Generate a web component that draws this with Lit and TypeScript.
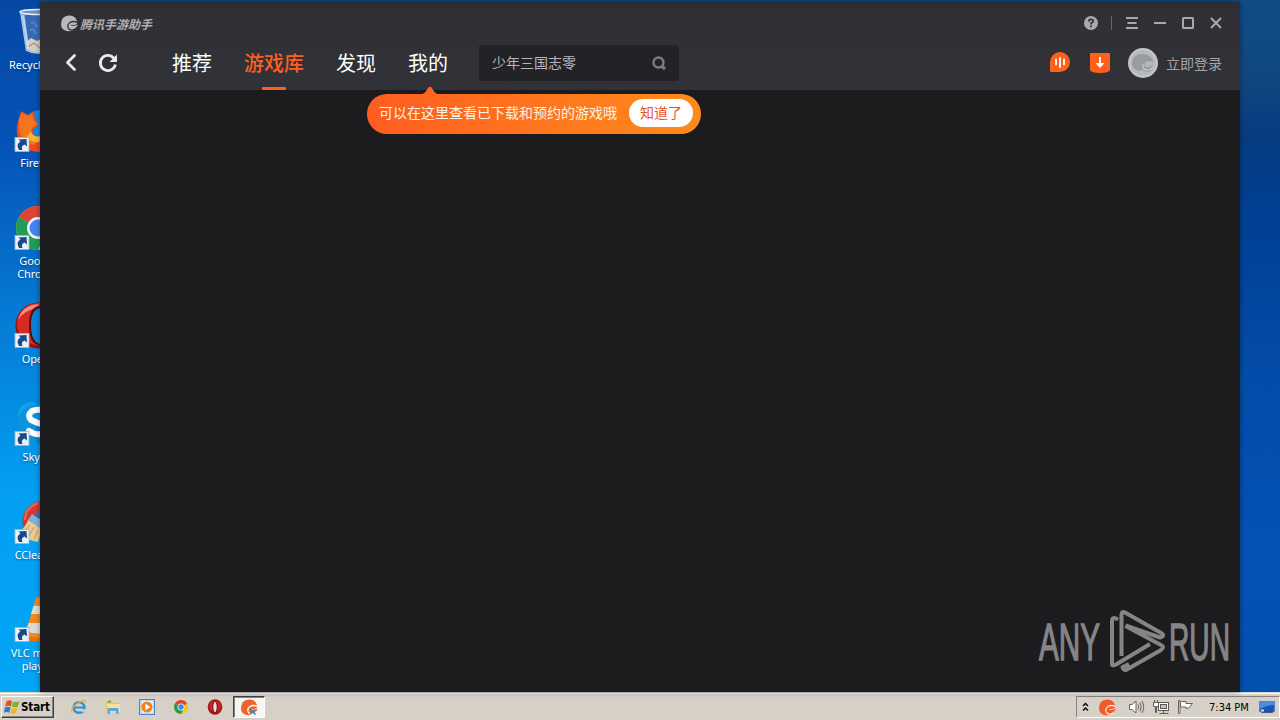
import { LitElement, html, css, svg, nothing } from 'lit';
import { customElement, property, state } from 'lit/decorators.js';
import { classMap } from 'lit/directives/class-map.js';

const shortcutIcons: Record<string, unknown> = {
  bin: svg`
    <path d="M7 3 L12 43 Q24 48 36 43 L41 3Z" fill="#7fa9d8" opacity="0.6"/>
    <path d="M11 7 L14 33 L34 33 L38 7Z" fill="#2f62b0" opacity="0.75"/>
    <path d="M12 34 L17 30 L23 33 L29 30 L36 34 L34 43 Q24 47 14 42Z" fill="#d5cfc2"/>
    <path d="M14 39 L20 35 L26 40 L31 36" stroke="#a58f72" stroke-width="1.200" fill="none"/>
    <path d="M9 7 L14 41" stroke="#d9e6f3" stroke-width="2.500" opacity="0.8"/>
    <path d="M6.500 3 L12.500 42 Q24 48 35 42 L41 3" fill="none" stroke="#a9c6e6" stroke-width="1.500"/>
    <ellipse cx="24" cy="4" rx="18" ry="2.500" fill="#6e93c0" stroke="#e2edf7" stroke-width="1.500"/>
    <path d="M17 15 Q21 13 23 19 M16 22 Q20 20 22 26" stroke="#4f86cf" stroke-width="2" fill="none"/>
  `,
  firefox: svg`
    <circle cx="27" cy="24" r="20" fill="#1686dd"/>
    <path d="M5 12 L7 5 L14 9 L20 5 L21 14 L25 19 L19 23 Q17 32 26 33 L44 22 Q46 45 25 46 Q6 45 3 28 Q2 18 5 12Z" fill="#ee4b1d"/>
    <path d="M5 13 L8 7 L14 10 L18 8 L20 15 L24 18 L18 22 Q14 30 23 35 L20 39 Q7 36 5 24Z" fill="#f3761f"/>
    <path d="M17 25 Q18 32 28 30 L25 36 Q17 37 13 31Z" fill="#f7b52c"/>
  `,
  chrome: svg`
    <circle cx="24" cy="24" r="22" fill="#fbc116"/>
    <path d="M24 24 L5 13 A22 22 0 0 1 43 13Z" fill="#db4437"/>
    <path d="M24 24 L5 13 A22 22 0 0 0 24 46 L29 34Z" fill="#1e9d57"/>
    <circle cx="24" cy="24" r="11" fill="#f2f4f5"/>
    <circle cx="24" cy="24" r="8.500" fill="#4285f4"/>
  `,
  opera: svg`
    <ellipse cx="24" cy="23.500" rx="22.500" ry="23" fill="#8d1512"/>
    <ellipse cx="24" cy="22" rx="21" ry="21" fill="#d62a22"/>
    <path d="M4 18 Q7 4 24 2 L24 6 Q10 8 4 18Z" fill="#f28d80"/>
    <path d="M15 23 Q15 4 26 4 Q38 4 38 23 Q38 43 26 43 Q15 43 15 23Z" fill="#5a0d0c"/>
    <path d="M17 23 Q17 6 28 6 Q38 6 38 23 Q38 42 28 42 Q17 42 17 23Z" fill="#0b82d8"/>
  `,
  skype: svg`
    <circle cx="17" cy="15" r="13" fill="#0fa0e6"/>
    <circle cx="24" cy="24" r="20" fill="#0b93dd"/>
    <circle cx="32" cy="34" r="12" fill="#0a7fd0"/>
    <path d="M34 12 Q24 8 18 11 Q13 15 17 20 Q21 22 27 24 Q34 27 31 32 Q24 37 15 31" fill="none" stroke="#fff" stroke-width="6" stroke-linecap="round"/>
  `,
  ccleaner: svg`
    <path d="M9 28 Q6 12 22 4 Q30 2 40 4 L40 28 L20 34Z" fill="#cf3a31"/>
    <path d="M11 22 Q11 10 24 5" fill="none" stroke="#e26a5d" stroke-width="2"/>
    <path d="M32 4 L21 18 L30 24 L40 10Z" fill="#2f6fb3"/>
    <path d="M18 16 L32 25 L28 31 L14 22Z" fill="#7fb3d8"/>
    <path d="M14 22 L28 31 L24 44 Q13 42 3 35 Q11 31 14 22Z" fill="#ecca95"/>
    <path d="M16 27 L9 35 M20 29 L15 38 M24 32 L20 41" stroke="#c79a5c" fill="none"/>
  `,
  vlc: svg`
    <path d="M9 35 L39 35 L44 45 L4 45Z" fill="#e8730c"/>
    <path d="M22 2 Q24 0 26 2 L37 39 Q24 45 11 39Z" fill="#f08a1b"/>
    <path d="M19.500 10 L28.500 10 L31 18 L17 18Z M14.500 27 L33.500 27 L36 35 Q24 40 12 35Z" fill="#dcdbd6"/>
  `,
};

// round creature with a crest, the tail curls in from the right
const appMark = (body: string, swirl: string) => svg`
  <path d="M1 9 Q1 1 9 0.500 Q15 0.500 16.500 5 Q17.500 7 17 9.500 L15 13 Q12 17 7 16 Q1 15 1 9Z" fill=${body}/>
  <path d="M17.500 7.500 Q13 5.500 10 7.500 Q6.500 10 8.500 13.500 Q11 16.500 15 14" fill="none" stroke=${swirl} stroke-width="1.300"/>
  <path d="M11 10.500 Q14 12 18 9.500 Q16.500 13.500 13 13.500 Q10.500 13 11 10.500Z" fill=${body}/>
  <path d="M11 10.300 Q14 11.500 17.500 9" fill="none" stroke=${swirl} stroke-width="0.800"/>
`;

@customElement('desktop-shortcut')
export class DesktopShortcut extends LitElement {
  @property() icon = '';
  @property() label = '';
  @property({ type: Boolean }) linked = false;

  static styles = css`
    :host {
      display: flex;
      flex-direction: column;
      align-items: center;
      gap: 2px;
      box-sizing: border-box;
      width: 75px;
      height: 98px;
      padding-top: 8px;
      font-family: 'Noto Sans', sans-serif;
      font-size: 11px;
      line-height: 13px;
      color: #fff;
    }

    .picture {
      display: block;
      width: 48px;
      height: 48px;
      flex: none;
    }

    .label {
      white-space: pre-line;
      text-align: center;
      letter-spacing: -0.1px;
      text-shadow: 0 1px 2px rgba(0, 20, 60, 0.5);
    }
  `;

  render() {
    return html`
      <svg class="picture" viewBox="0 0 48 48">
        ${shortcutIcons[this.icon]}
        ${this.linked
          ? svg`
            <rect x="1" y="31.500" width="14" height="14" fill="#eef1f4" stroke="#a9b3bd" stroke-width="0.800"/>
            <path d="M5 44 Q1.500 38 6.500 35.500 L4.500 33.500 L12.500 33 L13 40.500 L10.500 38.500 Q6.500 40 8.500 44Z" fill="#174a8c"/>`
          : nothing}
      </svg>
      <span class="label">${this.label}</span>
    `;
  }
}

@customElement('app-root')
export class AppRoot extends LitElement {
  @state() private activeTab = '游戏库';
  @state() private tipVisible = true;

  private shortcuts = [
    { icon: 'bin', label: 'Recycle Bin', linked: false },
    { icon: 'firefox', label: 'Firefox', linked: true },
    { icon: 'chrome', label: 'Google\nChrome', linked: true },
    { icon: 'opera', label: 'Opera', linked: true },
    { icon: 'skype', label: 'Skype', linked: true },
    { icon: 'ccleaner', label: 'CCleaner', linked: true },
    { icon: 'vlc', label: 'VLC media\nplayer', linked: true },
  ];

  private tabs = ['推荐', '游戏库', '发现', '我的'];

  static styles = css`
    :host {
      --accent: #ff5f1f;
      --muted: #a9a9ad;
      display: grid;
      grid-template-rows: 692px 28px;
      width: 1280px;
      height: 720px;
      overflow: hidden;
      font-family: 'Liberation Sans', 'Noto Sans CJK SC', sans-serif;
    }

    svg {
      display: block;
      flex: none;
    }

    button {
      padding: 0;
      border: none;
      background: none;
      color: inherit;
      font: inherit;
    }

    .desktop {
      display: grid;
      grid-template-columns: 40px 1200px 40px;
      background: linear-gradient(#0748a6, #0552b5 20%, #057bd5 46%, #03a0f2 72%, #03a5f6);
    }

    .shortcuts {
      overflow: hidden;
    }

    .wallpaper {
      background: linear-gradient(#124c86, #0f4680 12%, #063c80 20%, #004096 32%, #034daa 55%, #0552b4 80%, #0350ae);
    }

    .top-edge {
      height: 2px;
      background: #0b4789;
    }

    .window {
      position: relative;
      display: flex;
      flex-direction: column;
      height: 690px;
      background: #1c1c1f;
      box-shadow: 0 0 5px rgba(0, 10, 40, 0.45);
    }

    .header {
      height: 88px;
      background: linear-gradient(#2c2c31, #303036 20%, #313138);
    }

    .titlebar {
      display: flex;
      align-items: center;
      height: 42px;
      padding: 0 17px 0 20px;
      color: var(--muted);
    }

    .brand {
      display: flex;
      align-items: center;
      gap: 2px;
      margin-right: auto;
      font-size: 12px;
      font-weight: 700;
      font-style: italic;
      color: #aeaeb2;
    }

    .divider {
      width: 1px;
      height: 14px;
      margin: 0 13px;
      background: #65656b;
    }

    .controls {
      display: flex;
      gap: 14px;
    }

    .toolbar {
      display: flex;
      align-items: center;
      height: 38px;
      padding: 0 18px 0 20px;
    }

    .history {
      display: flex;
      gap: 18px;
      width: 112px;
    }

    .tabs {
      display: flex;
      gap: 32px;
      margin-right: 31px;
      font-size: 20px;
      line-height: 40px;
      color: #fff;
    }

    .tab {
      position: relative;
      height: 38px;
    }

    .tab.active {
      color: var(--accent);
      font-weight: 500;
    }

    .tab.active::after {
      content: '';
      position: absolute;
      left: 50%;
      bottom: -8px;
      width: 24px;
      height: 3px;
      margin-left: -12px;
      border-radius: 1px;
      background: var(--accent);
    }

    .search {
      display: flex;
      align-items: center;
      justify-content: space-between;
      box-sizing: border-box;
      width: 200px;
      height: 36px;
      padding: 0 12px 0 13px;
      border-radius: 3px;
      background: #232327;
      font-size: 14px;
      color: #b6b6ba;
    }

    .search-text {
      padding-bottom: 2px;
    }

    .account {
      display: flex;
      align-items: center;
      margin-left: auto;
      font-size: 14px;
      color: #a4a4a9;
    }

    .chat {
      margin: 0 20px 2px 0;
    }

    .download {
      margin-right: 18px;
    }

    .avatar {
      margin-right: 8px;
    }

    .login {
      padding-bottom: 1px;
    }

    .tip {
      position: absolute;
      left: 327px;
      top: 92px;
      display: flex;
      align-items: center;
      gap: 12px;
      box-sizing: border-box;
      width: 334px;
      height: 40px;
      padding: 0 8px 2px 12px;
      border-radius: 20px;
      background: linear-gradient(90deg, #ff5d20, #ff8b1c);
      font-size: 14px;
      line-height: 28px;
      white-space: nowrap;
      color: #fff3e6;
    }

    .tip-arrow {
      position: absolute;
      left: 53px;
      top: -8px;
    }

    .tip-close {
      width: 64px;
      height: 28px;
      border-radius: 14px;
      background: #fff;
      color: #e8531b;
    }

    .content {
      display: flex;
      flex: 1;
      align-items: flex-end;
      justify-content: flex-end;
      padding: 0 7px 20px 0;
    }

    .watermark {
      font-family: 'Liberation Sans', sans-serif;
      font-size: 52px;
    }

    .taskbar {
      display: flex;
      align-items: center;
      box-sizing: border-box;
      padding: 1px 0 0 1px;
      border-top: 1px solid #d6d1c8;
      background: #d6d0c7;
      box-shadow: inset 0 1px #fff;
      font-family: 'DejaVu Sans Condensed', 'DejaVu Sans', sans-serif;
      font-size: 11px;
      color: #000;
    }

    .start {
      display: flex;
      align-items: center;
      gap: 1px;
      box-sizing: border-box;
      width: 53px;
      height: 22px;
      padding-left: 2px;
      border: 1px solid;
      border-color: #fff #404040 #404040 #fff;
      box-shadow: inset -1px -1px #87827a;
      font-family: 'DejaVu Sans Condensed', 'DejaVu Sans', sans-serif;
      font-size: 11.5px;
      font-weight: bold;
      letter-spacing: -0.1px;
    }

    .launchers {
      display: flex;
      align-items: center;
      gap: 2px;
      margin-left: 9px;
    }

    .launcher {
      display: flex;
      align-items: center;
      justify-content: center;
      box-sizing: border-box;
      width: 32px;
      height: 22px;
    }

    .launcher.pressed {
      border: 1px solid;
      border-color: #404040 #fff #fff #404040;
      box-shadow: inset 1px 1px #87827a;
      background: #f7f5f2;
    }

    .tray {
      display: flex;
      align-items: center;
      box-sizing: border-box;
      width: 204px;
      height: 22px;
      margin-left: auto;
      padding-left: 5px;
      border: 1px solid;
      border-color: #87827a #fff #fff #87827a;
    }

    .tray-app {
      margin: 0 12px 0 9px;
    }

    .network {
      margin: 0 7px;
    }

    .clock {
      width: 42px;
      margin: 0 8px 0 15px;
      white-space: nowrap;
    }
  `;

  private _selectTab(tab: string) {
    this.activeTab = tab;
  }

  private _closeTip() {
    this.tipVisible = false;
  }

  private _renderTitlebar() {
    return html`
      <div class="titlebar">
        <div class="brand">
          <svg width="18" height="17" viewBox="0 0 18 17">${appMark('#b9b9bc', '#34343a')}</svg>
          <span>腾讯手游助手</span>
        </div>
        <svg width="14" height="14" viewBox="0 0 14 14">
          <circle cx="7" cy="7" r="7" fill="#a9a9ad"/>
          <path d="M4.800 5.500 Q4.800 3.300 7 3.300 Q9.200 3.300 9.200 5.200 Q9.200 6.300 7 7.300 V8.500" fill="none" stroke="#303036" stroke-width="1.700"/>
          <rect x="6.100" y="9.500" width="1.800" height="1.700" fill="#303036"/>
        </svg>
        <span class="divider"></span>
        <div class="controls">
          <svg width="14" height="14" viewBox="0 0 14 14" stroke="#a9a9ad" stroke-width="2">
            <path d="M1 2H13M2.500 7H11.500M1 12H13"/>
          </svg>
          <svg width="14" height="14" viewBox="0 0 14 14" stroke="#a9a9ad" stroke-width="2">
            <path d="M1 7H13"/>
          </svg>
          <svg width="14" height="14" viewBox="0 0 14 14" stroke="#a9a9ad" stroke-width="2" fill="none">
            <rect x="2" y="2" width="10" height="10" rx="0.500"/>
          </svg>
          <svg width="14" height="14" viewBox="0 0 14 14" stroke="#a9a9ad" stroke-width="2">
            <path d="M2 2L12 12M12 2L2 12"/>
          </svg>
        </div>
      </div>
    `;
  }

  private _renderToolbar() {
    return html`
      <div class="toolbar">
        <div class="history">
          <svg width="20" height="20" viewBox="0 0 20 20" fill="none" stroke="#e9e9eb" stroke-width="2.800" stroke-linecap="round" stroke-linejoin="round">
            <path d="M14.500 2.500 L7.500 9.500 L14.500 16.500"/>
          </svg>
          <svg width="20" height="20" viewBox="0 0 20 20">
            <path d="M16 5.300 A7.600 7.600 0 1 0 17.400 11.500" fill="none" stroke="#e9e9eb" stroke-width="2.800"/>
            <path d="M19 1.500 V9 H11.500Z" fill="#e9e9eb"/>
          </svg>
        </div>
        <div class="tabs">
          ${this.tabs.map(
            (tab) => html`
              <button
                class=${classMap({ tab: true, active: tab === this.activeTab })}
                @click=${() => this._selectTab(tab)}
              >${tab}</button>
            `
          )}
        </div>
        <div class="search">
          <span class="search-text">少年三国志零</span>
          <svg width="16" height="16" viewBox="0 0 16 16" fill="none" stroke="#7b7b80">
            <circle cx="7.500" cy="7.500" r="5" stroke-width="2.400"/>
            <path d="M10.500 11 L14 14" stroke-width="3"/>
          </svg>
        </div>
        <div class="account">
          <svg class="chat" width="20" height="22" viewBox="0 0 20 22">
            <path d="M0 11 A10 10 0 1 1 10 21 H1 Q0 21 0 20Z" fill="#ff611d"/>
            <path d="M6 8.500V13.500M10 7V16M14 8.500V13.500" stroke="#fff" stroke-width="1.800" stroke-linecap="round"/>
          </svg>
          <svg class="download" width="20" height="20" viewBox="0 0 20 20">
            <path d="M1 0 H19 Q20 0 20 1 V17 Q19 20 10 20 Q1 20 0 17 V1 Q0 0 1 0Z" fill="#ff611d"/>
            <path d="M10 4 V13" stroke="#fff" stroke-width="1.800"/>
            <path d="M5.500 10 H14.500 L10 15Z" fill="#fff"/>
          </svg>
          <svg class="avatar" width="30" height="30" viewBox="0 0 30 30">
            <circle cx="15" cy="15" r="15" fill="#c3c4c6"/>
            <circle cx="15" cy="15" r="12.500" fill="#b6b8ba"/>
            <path d="M4 17 Q4 6 15 6 Q24 7 25 14 Q21 12 18 14 Q15 17 18 19 Q22 20 26 16 Q26 22 20 24 L15 22 Q8 25 4 17Z" fill="#999c9f"/>
            <path d="M15 16 Q14 22 20 22 Q25 21 26 17" fill="none" stroke="#c6c8ca" stroke-width="1.200"/>
          </svg>
          <span class="login">立即登录</span>
        </div>
      </div>
    `;
  }

  private _renderTip() {
    if (!this.tipVisible) {
      return nothing;
    }

    return html`
      <div class="tip">
        <svg class="tip-arrow" width="20" height="9" viewBox="0 0 20 9">
          <path d="M0 9 Q5 8 8 2 Q10 -1 12 2 Q15 8 20 9Z" fill="#ff6420"/>
        </svg>
        <span>可以在这里查看已下载和预约的游戏哦</span>
        <button class="tip-close" @click=${this._closeTip}>知道了</button>
      </div>
    `;
  }

  private _renderWatermark() {
    return html`
      <svg class="watermark" width="196" height="64" viewBox="0 0 196 64" fill="#858587">
        <text x="2" y="52" textLength="61" lengthAdjust="spacingAndGlyphs" stroke="#858587" stroke-width="1.400">ANY</text>
        <g fill="none" stroke="#858587" stroke-width="4" stroke-linejoin="round">
          <path d="M81 11.500 Q75 8 75 13 V56 Q75 58.500 79 56.500 L113 36"/>
          <path d="M84.500 48 V6 Q85 3 88 4.500 L125 25.500 Q128 28 123 29.500 L88.500 17.500"/>
          <path d="M88.500 18 L124 37 Q128 39 124 42 L89 62 Q86 62 85.500 59 L92 56"/>
        </g>
        <text x="132" y="52" textLength="61" lengthAdjust="spacingAndGlyphs" stroke="#858587" stroke-width="1.400">RUN</text>
      </svg>
    `;
  }

  private _renderTaskbar() {
    return html`
      <div class="taskbar">
        <button class="start">
          <svg width="16" height="16" viewBox="0 0 15 15">
            <path d="M2.500 2 Q5 0.500 7.500 2 L6.500 7 Q4 5.500 1 7Z" fill="#e6501f"/>
            <path d="M8.500 2.300 Q11 3.500 14.500 2 L13 7 Q10.500 8.500 7.500 7.300Z" fill="#76b72c"/>
            <path d="M0.800 8 Q3.500 6.500 6.200 8 L5 13 Q2.500 11.500 0 13Z" fill="#2d7dd2"/>
            <path d="M7.200 8.500 Q10 9.500 12.800 8 L11.500 13 Q8.500 14.500 6 13.300Z" fill="#f5b81c"/>
          </svg>
          Start
        </button>
        <div class="launchers">
          <span class="launcher">
            <svg width="16" height="16" viewBox="0 0 16 16" fill="none">
              <circle cx="8" cy="8.500" r="5.300" stroke="#2b95dc" stroke-width="2.600"/>
              <path d="M3.500 8.500H13" stroke="#2b95dc" stroke-width="2"/>
              <path d="M10 11.500H15" stroke="#d6d0c7" stroke-width="2.500"/>
              <path d="M1 14 Q-1 9 7 4 Q14 -0.500 15 3" stroke="#edb42d" stroke-width="1.300"/>
            </svg>
          </span>
          <span class="launcher">
            <svg width="16" height="16" viewBox="0 0 16 16">
              <path d="M1 2H6L7 3.500H14V13H1Z" fill="#e9c65a"/>
              <path d="M2 5H15V13H2Z" fill="#f7e29a"/>
              <path d="M2.500 15V9H13.500V15H11V12H5V15Z" fill="#5aa9dc"/>
              <path d="M3 2.500H6" stroke="#42a14a" stroke-width="1.500"/>
            </svg>
          </span>
          <span class="launcher">
            <svg width="16" height="16" viewBox="0 0 16 16">
              <rect x="0.500" y="0.500" width="15" height="15" fill="#b8d9ee" stroke="#4689c4"/>
              <rect x="3" y="2" width="11" height="12" fill="#e7f1f8"/>
              <circle cx="8" cy="8" r="5.500" fill="#f2821c"/>
              <path d="M6.300 4.800L11.500 8L6.300 11.200Z" fill="#fff"/>
            </svg>
          </span>
          <span class="launcher">
            <svg width="14" height="14" viewBox="2 2 44 44">${shortcutIcons.chrome}</svg>
          </span>
          <span class="launcher">
            <svg width="16" height="16" viewBox="0 0 16 16">
              <ellipse cx="8" cy="8" rx="7.300" ry="7.700" fill="#a81518"/>
              <ellipse cx="8" cy="7" rx="6" ry="5.500" fill="#c42725"/>
              <ellipse cx="8" cy="8" rx="2.200" ry="5.700" fill="#f1ddd8" stroke="#74090c"/>
            </svg>
          </span>
          <span class="launcher pressed">
            <svg width="18" height="17" viewBox="0 0 18 17">
              ${appMark('#f4602a', '#fff')}
              <path d="M10 9.500 L15.500 15.500 M14.500 10.500 L10 15" stroke="#3d86a8" stroke-width="1.600"/>
            </svg>
          </span>
        </div>
        <div class="tray">
          <svg width="7" height="10" viewBox="0 0 7 10" fill="none" stroke="#000" stroke-width="1.400">
            <path d="M1 4L3.500 1.500L6 4M1 8.500L3.500 6L6 8.500"/>
          </svg>
          <svg class="tray-app" width="18" height="17" viewBox="0 0 18 17">${appMark('#f25a2b', '#fbe6dc')}</svg>
          <svg width="18" height="16" viewBox="0 0 18 16" fill="none" stroke="#66635f">
            <path d="M1.500 5.500H4L8 2V14L4 10.500H1.500Z" fill="#fff"/>
            <path d="M10 5.500Q11.500 8 10 10.500M12 3.500Q14.500 8 12 12.500M14 2Q17.500 8 14 14"/>
          </svg>
          <svg class="network" width="17" height="16" viewBox="0 0 17 16" fill="#fff" stroke="#5c5a57">
            <rect x="5.500" y="3.500" width="10" height="8"/>
            <rect x="7.500" y="5.500" width="6" height="4" fill="#c4c2be"/>
            <path d="M6.500 14.500H15.500M10.500 12V14"/>
            <path d="M0.500 3.500H5.500V7.500H3.500V13.500H2.500V7.500H0.500ZM1.500 1V3M4.500 1V3"/>
          </svg>
          <svg width="17" height="16" viewBox="0 0 17 16" fill="#fff" stroke="#66635f">
            <path d="M1.500 1.500H3V14.500H1.500Z"/>
            <path d="M3.500 2.500H9V4.500H15.500L13.500 7Q13 9.500 9 9.500V8H3.500Z"/>
          </svg>
          <span class="clock">7:34 PM</span>
          <svg width="16" height="14" viewBox="0 0 16 14">
            <rect x="0.500" y="1.500" width="15" height="10" fill="#1d55b5" stroke="#4f86cb"/>
            <path d="M1 2H15V5Q8 5 1 9Z" fill="#4b8ee0"/>
            <path d="M2 12H14" stroke="#143772" stroke-width="1.500"/>
            <rect x="2" y="9.500" width="3" height="2" fill="#c8e2f6"/>
          </svg>
        </div>
      </div>
    `;
  }

  render() {
    return html`
      <div class="desktop">
        <div class="shortcuts">
          ${this.shortcuts.map(
            (item) => html`
              <desktop-shortcut
                .icon=${item.icon}
                .label=${item.label}
                .linked=${item.linked}
              ></desktop-shortcut>
            `
          )}
        </div>
        <div>
          <div class="top-edge"></div>
          <div class="window">
            <div class="header">
              ${this._renderTitlebar()}
              ${this._renderToolbar()}
            </div>
            <div class="content">${this._renderWatermark()}</div>
            ${this._renderTip()}
          </div>
        </div>
        <div class="wallpaper"></div>
      </div>
      ${this._renderTaskbar()}
    `;
  }
}
